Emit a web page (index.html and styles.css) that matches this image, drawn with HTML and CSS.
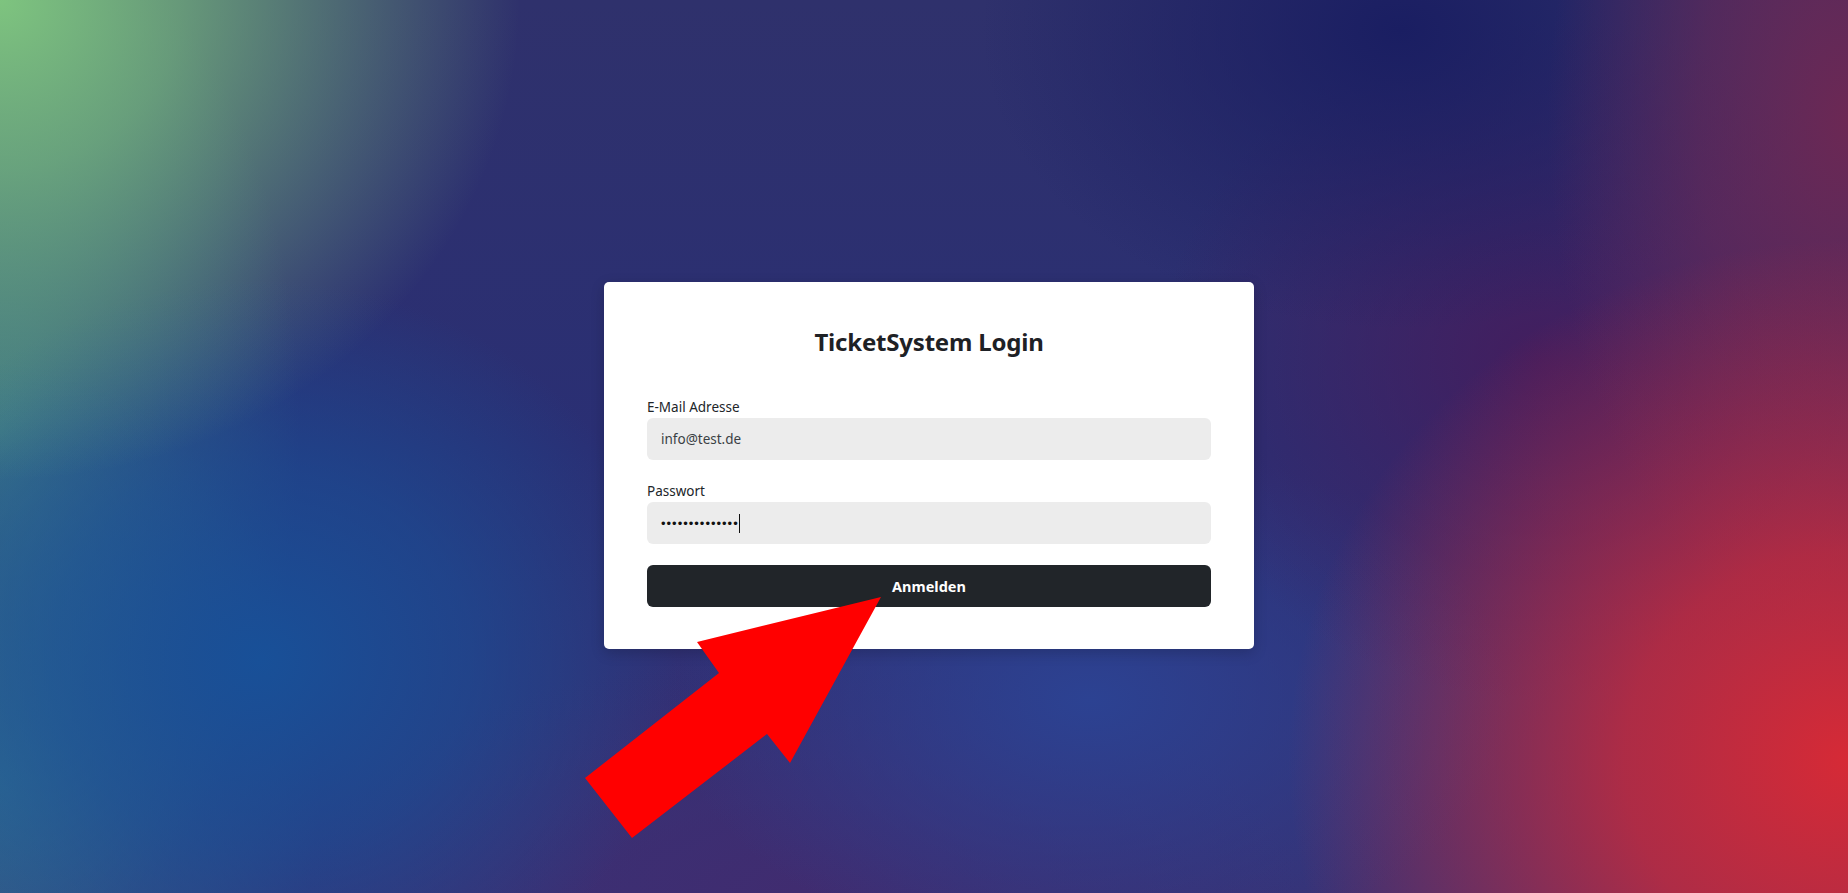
FILE: index.html
```html
<!DOCTYPE html>
<html lang="de">
<head>
<meta charset="utf-8">
<title>TicketSystem Login</title>
<link rel="stylesheet" href="styles.css">
</head>
<body>
<main class="page">
  <section class="card">
    <h2 class="title">TicketSystem Login</h2>
    <form class="form">
      <div class="field">
        <label class="label" for="email">E-Mail Adresse</label>
        <div class="input">info@test.de</div>
      </div>
      <div class="field">
        <label class="label" for="pw">Passwort</label>
        <div class="input"><span class="dots">••••••••••••••</span><span class="caret"></span></div>
      </div>
      <button type="button" class="btn">Anmelden</button>
    </form>
  </section>
  <svg class="arrow" width="1848" height="893" viewBox="0 0 1848 893">
    <polygon points="881,597 697,642 719,673 585,778 632,838 767,734 790,763" fill="#ff0000"/>
  </svg>
</main>
</body>
</html>
```
FILE: styles.css
```css
* { box-sizing: border-box; }
html, body { margin: 0; padding: 0; height: 100%; }
body {
  font-family: "Noto Sans", "Open Sans", sans-serif;
  color: #212529;
  overflow: hidden;
}
.page {
  position: relative;
  width: 1848px;
  height: 893px;
  display: flex;
  justify-content: center;
  align-items: flex-start;
  padding-top: 282px;
  padding-left: 10px;
  background:
    radial-gradient(ellipse 520px 480px at 0px 0px, rgba(126,196,127,1) 0%, rgba(126,196,127,0.7) 35%, rgba(126,196,127,0) 100%),
    radial-gradient(ellipse 420px 380px at 260px 660px, rgba(24,80,152,1) 0%, rgba(24,80,152,0.6) 50%, rgba(24,80,152,0) 100%),
    radial-gradient(ellipse 320px 420px at 0px 780px, rgba(48,110,145,0.9) 0%, rgba(48,110,145,0) 100%),
    radial-gradient(ellipse 300px 520px at 0px 430px, rgba(62,122,132,0.95) 0%, rgba(62,122,132,0.5) 50%, rgba(62,122,132,0) 100%),
    radial-gradient(ellipse 560px 520px at 1848px 760px, rgba(214,42,54,1) 0%, rgba(214,42,54,0.75) 40%, rgba(214,42,54,0) 100%),
    radial-gradient(ellipse 300px 520px at 1848px 120px, rgba(108,40,84,1) 0%, rgba(108,40,84,0.6) 50%, rgba(108,40,84,0) 100%),
    radial-gradient(ellipse 420px 300px at 1400px 30px, rgba(26,30,98,1) 0%, rgba(26,30,98,0) 100%),
    radial-gradient(ellipse 380px 340px at 1540px 360px, rgba(70,28,92,0.9) 0%, rgba(70,28,92,0) 100%),
    radial-gradient(ellipse 420px 260px at 1090px 700px, rgba(44,66,146,1) 0%, rgba(44,66,146,0) 100%),
    radial-gradient(ellipse 500px 240px at 800px 893px, rgba(64,44,112,1) 0%, rgba(64,44,112,0) 100%),
    linear-gradient(180deg, #2f316c 0%, #2a2f74 50%, #373276 100%);
}
.card {
  width: 650px;
  background: #ffffff;
  border-radius: 5px;
  box-shadow: 0 4px 14px rgba(0,0,0,0.18);
  padding: 45px 43px 42px 43px;
}
.title {
  margin: 0 0 41px 0;
  text-align: center;
  font-size: 24px;
  line-height: 29px;
  font-weight: 700;
  color: #1e2125;
  letter-spacing: -0.2px;
}
.form { display: flex; flex-direction: column; gap: 21px; }
.field { display: flex; flex-direction: column; }
.label {
  font-size: 13.5px;
  line-height: 21px;
  color: #212529;
}
.input {
  height: 42px;
  background: #ececec;
  border-radius: 6px;
  padding: 0 14px;
  display: flex;
  align-items: center;
  font-size: 13.5px;
  color: #3a3f44;
}
.dots {
  font-family: "Liberation Sans", sans-serif;
  font-size: 13px;
  letter-spacing: 1px;
  color: #111;
}
.caret { display: inline-block; width: 1px; height: 19px; background: #111; margin-left: 0; }
.btn {
  height: 42px;
  border: 0;
  border-radius: 6px;
  background: #212529;
  color: #ffffff;
  font-family: inherit;
  font-size: 14.5px;
  font-weight: 700;
  cursor: pointer;
}
.arrow { position: absolute; left: 0; top: 0; pointer-events: none; }
```
